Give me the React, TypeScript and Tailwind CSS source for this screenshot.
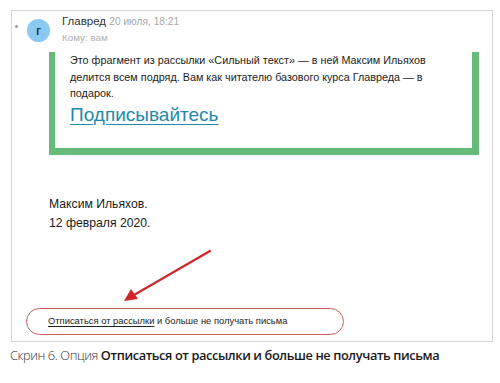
import React from "react";

export default function App() {
  return (
    <div className="relative w-[500px] h-[383px] bg-white overflow-hidden" style={{ fontFamily: '"Liberation Sans", Arial, sans-serif' }}>
      <div className="ml-[11px] mt-[10px] w-[482px] h-[332px] border border-[#d6d6d6] relative">
        {/* bullet dot */}
        <div className="absolute left-[3px] top-[14px] w-[3px] h-[3px] rounded-full bg-[#9a9a9a]" />
        {/* header */}
        <div className="flex h-[41px]">
          <div className="ml-[15px] mt-[8px] w-[23px] h-[23px] rounded-full bg-[#8ac9f1] flex items-center justify-center text-[#1e3f66] text-[12px] font-bold leading-none">
            г
          </div>
          <div className="ml-[12px] flex flex-col">
            <div className="mt-[3px] text-[11.5px] leading-[15px] text-[#333] whitespace-nowrap">
              Главред <span className="text-[10.2px] text-[#a8a8a8]">20 июля, 18:21</span>
            </div>
            <div className="mt-[3px] text-[9.8px] leading-[12px] text-[#b0b0b0]">Кому: вам</div>
          </div>
        </div>
        {/* green box */}
        <div className="ml-[37px] w-[430px] border-l-[6px] border-r-[7px] border-b-[7px] border-[#67bb79] pl-[15px] pb-[21px]">
          <p className="text-[10.8px] leading-[16.5px] text-[#222] whitespace-nowrap">
            Это фрагмент из рассылки «Сильный текст» — в ней Максим Ильяхов
            <br />
            делится всем подряд. Вам как читателю базового курса Главреда — в
            <br />
            подарок.
          </p>
          <a className="block mt-[1px] text-[19px] leading-[24px] text-[#2388ab] underline underline-offset-[3px] decoration-1">
            Подписывайтесь
          </a>
        </div>
        {/* signature */}
        <div className="ml-[37px] mt-[40px] text-[12.2px] leading-[19px] text-[#1a1a1a]">
          <div>Максим Ильяхов.</div>
          <div>12 февраля 2020.</div>
        </div>
        {/* pill */}
        <div className="ml-[14px] mt-[75px] w-[318px] h-[27px] rounded-full border-[1.5px] border-[#c9605a] flex items-center pl-[21px] text-[9.4px] text-[#222] whitespace-nowrap">
          <span className="underline underline-offset-[2px]">Отписаться от рассылки</span>
          <span>&nbsp;и больше не получать письма</span>
        </div>
      </div>
      {/* caption */}
      <div className="ml-[10px] mt-[3px] text-[12.8px] leading-[20px] text-[#333] tracking-[-0.4px] whitespace-nowrap" style={{ fontFamily: '"Open Sans", sans-serif' }}>
        <span className="font-light">Скрин 6. Опция </span>
        <span className="font-semibold text-[#1a1a1a]">Отписаться от рассылки и больше не получать письма</span>
      </div>
      {/* arrow annotation */}
      <svg className="absolute left-0 top-0" width="500" height="383" viewBox="0 0 500 383">
        <line x1="210" y1="251" x2="134" y2="295" stroke="#d0252b" strokeWidth="2.2" strokeLinecap="round" />
        <polygon points="124,301 131,289 138,299" fill="#d0252b" />
      </svg>
    </div>
  );
}
